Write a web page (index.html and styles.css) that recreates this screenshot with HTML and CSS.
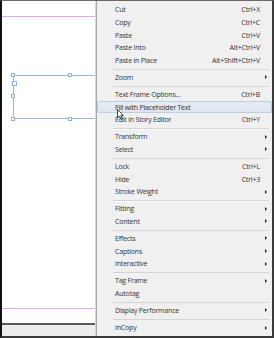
FILE: index.html
```html
<!DOCTYPE html>
<html lang="en">

<head>
    <meta charset="UTF-8">
    <meta name="viewport" content="width=device-width, initial-scale=1.0">
    <title>Context menu</title>

    <link rel="stylesheet" href="styles.css">
</head>

<body>
    <div class="shot">
        <div class="canvas">
            <div class="page">
                <div class="guide guide-top"></div>
                <div class="frame">
                    <span class="handle h1"></span>
                    <span class="handle h2"></span>
                    <span class="handle h3"></span>
                    <span class="handle h4"></span>
                    <span class="handle h5"></span>
                    <span class="inport"></span>
                </div>
                <div class="guide guide-bottom"></div>
            </div>
            <div class="page-edge"></div>
            <div class="pasteboard"></div>
        </div>

        <ul class="menu">
            <li class="item"><span>Cut</span><span class="key">Ctrl+X</span></li>
            <li class="item"><span>Copy</span><span class="key">Ctrl+C</span></li>
            <li class="item"><span>Paste</span><span class="key">Ctrl+V</span></li>
            <li class="item"><span>Paste Into</span><span class="key">Alt+Ctrl+V</span></li>
            <li class="item"><span>Paste in Place</span><span class="key">Alt+Shift+Ctrl+V</span></li>
            <li class="sep"></li>
            <li class="item sub"><span>Zoom</span></li>
            <li class="sep"></li>
            <li class="item"><span>Text Frame Options...</span><span class="key">Ctrl+B</span></li>
            <li class="item active"><span>Fill with Placeholder Text</span></li>
            <li class="item"><span>Edit in Story Editor</span><span class="key">Ctrl+Y</span></li>
            <li class="sep"></li>
            <li class="item sub"><span>Transform</span></li>
            <li class="item sub"><span>Select</span></li>
            <li class="sep"></li>
            <li class="item"><span>Lock</span><span class="key">Ctrl+L</span></li>
            <li class="item"><span>Hide</span><span class="key">Ctrl+3</span></li>
            <li class="item sub"><span>Stroke Weight</span></li>
            <li class="sep"></li>
            <li class="item sub"><span>Fitting</span></li>
            <li class="item sub"><span>Content</span></li>
            <li class="sep"></li>
            <li class="item sub"><span>Effects</span></li>
            <li class="item sub"><span>Captions</span></li>
            <li class="item sub"><span>Interactive</span></li>
            <li class="sep"></li>
            <li class="item sub"><span>Tag Frame</span></li>
            <li class="item"><span>Autotag</span></li>
            <li class="sep"></li>
            <li class="item sub"><span>Display Performance</span></li>
            <li class="sep"></li>
            <li class="item sub"><span>InCopy</span></li>
        </ul>

        <!-- mouse pointer over the highlighted item -->
        <svg class="cursor" width="7" height="11" viewBox="0 0 7 11">
            <path d="M0.5 0.5 L0.5 9 L2.5 7 L4 10.5 L5.3 9.9 L3.8 6.6 L6.5 6.6 Z" fill="#fff" stroke="#111" stroke-width="0.8" stroke-linejoin="round" />
        </svg>
    </div>
</body>

</html>
```

FILE: styles.css
```css
* {
    margin: 0;
    padding: 0;
    box-sizing: border-box;
}

body {
    width: 274px;
    height: 338px;
    overflow: hidden;
    background: #fff;
    font-family: "Open Sans", "Noto Sans", sans-serif;
}

.shot {
    position: relative;
    display: flex;
    height: 338px;
    border-left: 2px solid #111;
    border-top: 1px solid #6a6a6a;
    border-right: 2px solid #3a3a3a;
    border-bottom: 2px solid #3a3a3a;
}

/* document side */
.canvas {
    width: 94px;
    display: flex;
    flex-direction: column;
}

.page {
    position: relative;
    flex: 1;
    background: #fff;
}

.page-edge {
    height: 2px;
    background: #5a5a5a;
}

.pasteboard {
    height: 11px;
    background: #ececec;
}

.guide {
    position: absolute;
    left: 0;
    right: 0;
    height: 1px;
    background: #e2a6e6;
}

.guide-top {
    top: 15px;
}

.guide-bottom {
    top: 307px;
}

.frame {
    position: absolute;
    left: 11px;
    top: 74px;
    width: 120px;
    height: 44px;
    border: 1px solid #93b7df;
}

.handle {
    position: absolute;
    width: 4px;
    height: 4px;
    background: #fff;
    border: 1px solid #8fb2da;
}

.h1 { left: -3px; top: -3px; }
.h2 { left: 54px; top: -3px; }
.h3 { left: -3px; top: 18px; }
.h4 { left: -3px; bottom: -3px; }
.h5 { left: 54px; bottom: -3px; }

.inport {
    position: absolute;
    left: -2px;
    top: 5px;
    width: 5px;
    height: 5px;
    background: #fff;
    border: 1px solid #8fb2da;
}

/* context menu */
.menu {
    position: relative;
    z-index: 1;
    flex: 1;
    list-style: none;
    padding-top: 2.7px;
    background: #f0f0f0;
    border-left: 1px solid #a7a7a7;
    box-shadow: -1px 0 0 #d8d8d8;
    color: #333;
    font-size: 7px;
    letter-spacing: -0.2px;
}

.item {
    display: grid;
    grid-template-columns: 1fr auto 11px;
    align-items: center;
    height: 12.6px;
    padding-left: 18px;
    padding-right: 1px;
    white-space: nowrap;
}

.sub::after {
    content: "";
    grid-column: 3;
    justify-self: center;
    width: 0;
    height: 0;
    border-top: 2px solid transparent;
    border-bottom: 2px solid transparent;
    border-left: 2px solid #222;
}

.key {
    grid-column: 2;
}

.active {
    background: linear-gradient(#e7edf4, #dbe4ee);
    outline: 1px solid #bccde0;
    outline-offset: -1px;
    border-radius: 2px;
}

.sep {
    height: 4.5px;
    margin-left: 16px;
    margin-right: 3px;
    background: linear-gradient(transparent 1.7px, #d5d5d5 1.7px, #d5d5d5 2.7px, #fbfbfb 2.7px, #fbfbfb 3.5px, transparent 3.5px);
}

.cursor {
    position: absolute;
    z-index: 2;
    left: 115px;
    top: 108px;
}
```
